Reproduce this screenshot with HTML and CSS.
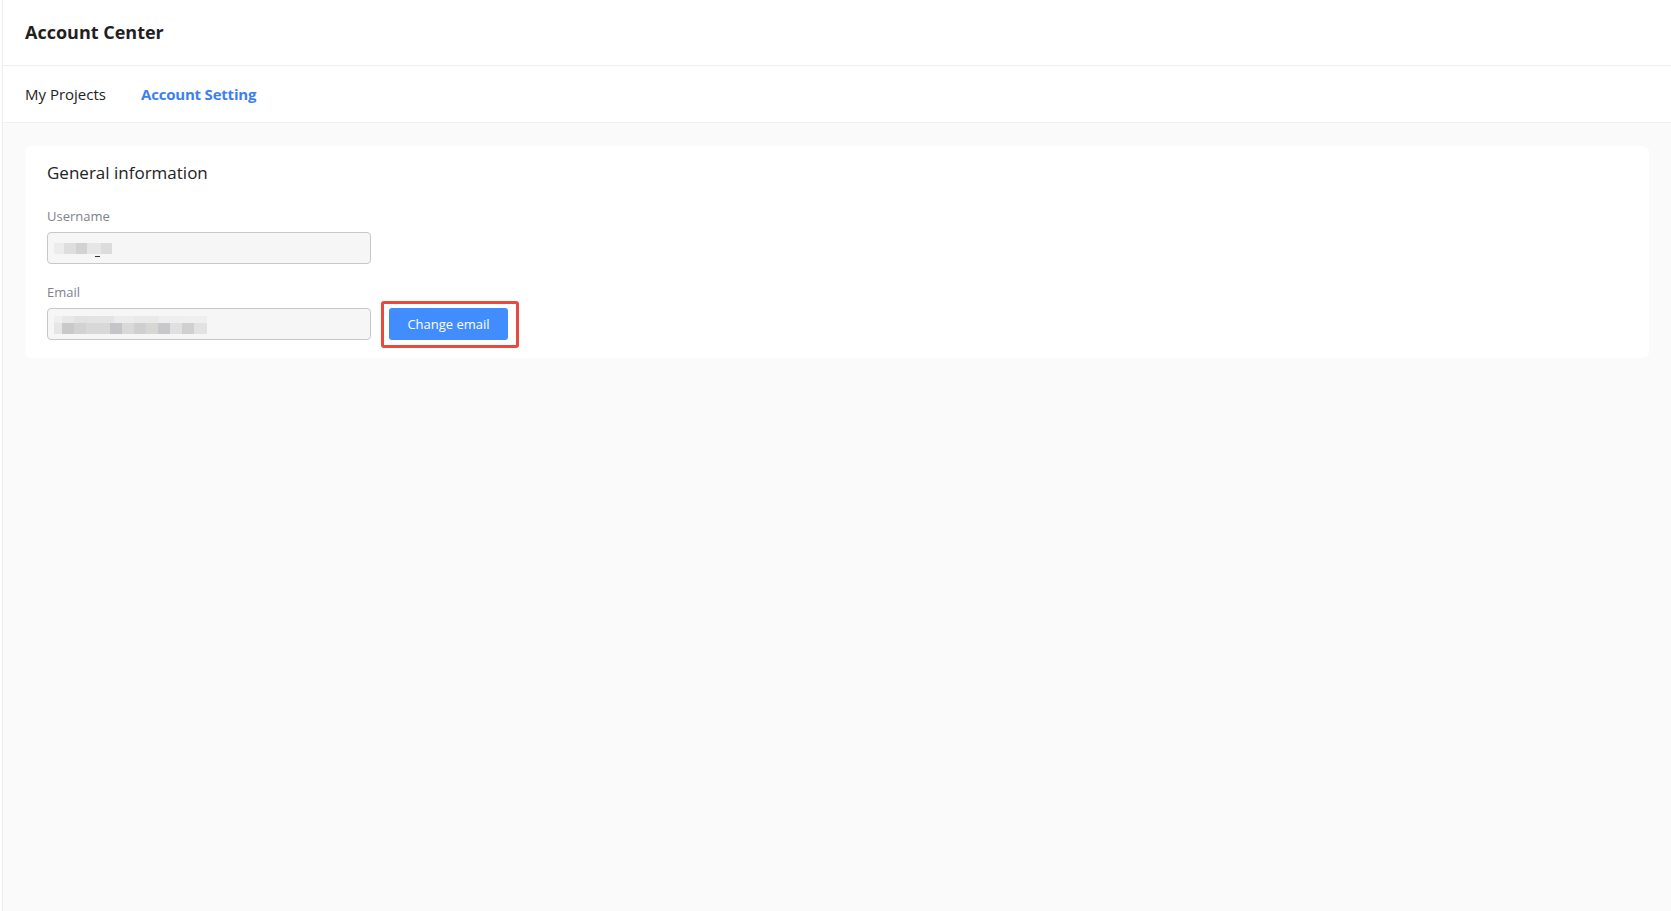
FILE: index.html
```html
<!DOCTYPE html>
<html lang="en">
<head>
<meta charset="utf-8">
<title>Account Center</title>
<link rel="stylesheet" href="styles.css">
</head>
<body>
<div class="app">
  <header class="header">
    <h1 class="title">Account Center</h1>
  </header>
  <nav class="tabs">
    <a class="tab">My Projects</a>
    <a class="tab active">Account Setting</a>
  </nav>
  <main class="main">
    <section class="card">
      <h2 class="card-title">General information</h2>
      <div class="field">
        <label class="label">Username</label>
        <div class="row">
          <div class="input">
            <span class="blur blur-user"></span>
            <span class="underscore"></span>
          </div>
        </div>
      </div>
      <div class="field">
        <label class="label">Email</label>
        <div class="row">
          <div class="input">
            <span class="blur blur-email">
              <span class="blur-top"></span>
              <span class="blur-bottom"></span>
            </span>
          </div>
          <span class="btn-wrap">
            <button class="btn">Change email</button>
            <span class="highlight"></span>
          </span>
        </div>
      </div>
    </section>
  </main>
</div>
</body>
</html>
```

FILE: styles.css
```css
* { box-sizing: border-box; }
html, body { margin: 0; padding: 0; height: 100%; }
body {
  font-family: "Open Sans", "Noto Sans", sans-serif;
  color: #222;
  background: #fff;
}
.app {
  margin-left: 2px;
  border-left: 1px solid #ececec;
  min-height: 100vh;
  display: flex;
  flex-direction: column;
  background: #fafafa;
}
.header {
  height: 66px;
  background: #fff;
  border-bottom: 1px solid #efefef;
  padding-left: 22px;
  display: flex;
  align-items: center;
}
.title {
  margin: 0;
  font-size: 18px;
  font-weight: 700;
  color: #1f1f1f;
  padding-bottom: 1px;
}
.tabs {
  height: 57px;
  background: #fff;
  border-bottom: 1px solid #f0f0f0;
  padding-left: 22px;
  display: flex;
  align-items: center;
  gap: 35px;
}
.tab {
  font-size: 15px;
  color: #222;
}
.tab.active {
  color: #3d7ff2;
  font-weight: 700;
  letter-spacing: -0.2px;
}
.main {
  flex: 1;
  padding: 23px 22px;
}
.card {
  background: #fff;
  border-radius: 6px;
  padding: 15px 22px 18px;
}
.card-title {
  margin: 0 0 21px;
  font-family: "Open Sans", "Noto Sans", sans-serif;
  font-weight: 400;
  font-size: 17px;
  line-height: 24px;
  color: #222;
}
.field + .field { margin-top: 18px; }
.label {
  display: block;
  font-size: 13px;
  line-height: 20px;
  color: #7e8191;
  margin-bottom: 6px;
}
.row {
  display: flex;
  align-items: center;
  gap: 18px;
}
.input {
  position: relative;
  width: 324px;
  height: 32px;
  background: #f6f6f6;
  border: 1px solid #c6c6cc;
  border-radius: 4px;
  padding-left: 6px;
  display: flex;
  align-items: center;
}
.blur { display: block; }
.blur-user {
  width: 58px;
  height: 11px;
  background: linear-gradient(to right,
    #ececec 0 10px, #dedede 10px 22px, #d2d2d2 22px 33px,
    #e6e6e6 33px 47px, #dcdcdc 47px 58px);
}
.underscore {
  position: absolute;
  left: 47px;
  top: 23px;
  width: 5px;
  height: 1px;
  background: #333;
}
.blur-email {
  width: 153px;
  display: flex;
  flex-direction: column;
  margin-top: 2px;
}
.blur-top {
  display: block;
  height: 7px;
  background: linear-gradient(to right,
    #efefef 0 8px, #e8e8e8 8px 20px, #e2e2e2 20px 35px, #e4e4e4 35px 60px,
    #ececec 60px 80px, #e9e9e9 80px 105px, #eeeeee 105px 125px, #efefef 125px 153px);
}
.blur-bottom {
  display: block;
  height: 11px;
  background: linear-gradient(to right,
    #e6e6e6 0 8px, #c9c9c9 8px 20px, #d2d2d2 20px 32px, #d8d8d8 32px 56px,
    #c5c5c9 56px 68px, #d9d9d9 68px 80px, #cfcfcf 80px 92px, #d6d6d3 92px 104px,
    #c8c8cb 104px 116px, #e0e0e2 116px 128px, #d0d0d0 128px 140px, #e2e2e2 140px 153px);
}
.btn-wrap {
  position: relative;
  display: inline-flex;
}
.btn {
  width: 119px;
  height: 32px;
  border: none;
  border-radius: 3px;
  background: #418dff;
  color: #fff;
  font-family: "Open Sans", "Noto Sans", sans-serif;
  font-size: 13px;
  padding: 0;
  cursor: pointer;
}
.highlight {
  position: absolute;
  left: -8px;
  top: -7px;
  right: -11px;
  bottom: -8px;
  border: 3px solid #e84a3f;
  border-radius: 3px;
  pointer-events: none;
}
```
